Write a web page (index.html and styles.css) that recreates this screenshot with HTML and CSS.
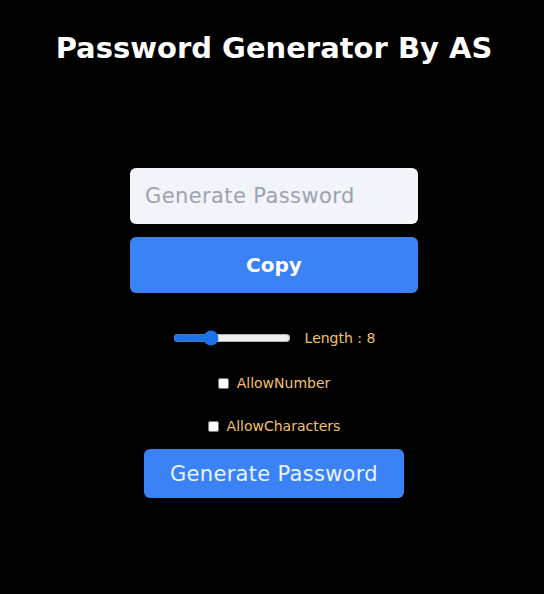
FILE: index.html
```html
<!DOCTYPE html>
<html lang="en">
<head>
<meta charset="utf-8">
<title>Password Generator By AS</title>
<link rel="stylesheet" href="styles.css">
</head>
<body>
  <h1 class="title">Password Generator By AS</h1>
  <main class="panel">
    <input class="pw-field" type="text" placeholder="Generate Password" readonly>
    <button class="btn btn-copy">Copy</button>
    <div class="row row-length">
      <input class="slider" type="range" min="5" max="15" value="8">
      <label class="label">Length : 8</label>
    </div>
    <div class="row row-number">
      <input class="check" type="checkbox" id="num">
      <label class="label" for="num">AllowNumber</label>
    </div>
    <div class="row row-chars">
      <input class="check" type="checkbox" id="chars">
      <label class="label" for="chars">AllowCharacters</label>
    </div>
    <button class="btn btn-generate">Generate Password</button>
  </main>
</body>
</html>
```
FILE: styles.css
```css
* { box-sizing: border-box; }
html, body {
  margin: 0;
  padding: 0;
  background: #000;
  height: 100%;
}
body {
  font-family: "DejaVu Sans", "Noto Sans", sans-serif;
  color: #fff;
  display: flex;
  flex-direction: column;
  align-items: center;
  padding-left: 4px;
}
.title {
  margin: 28px 0 0;
  font-size: 29px;
  font-weight: 700;
  line-height: 40px;
  color: #fff;
}
.panel {
  margin-top: 100px;
  display: flex;
  flex-direction: column;
  align-items: center;
  width: 288px;
}
.pw-field {
  width: 288px;
  height: 56px;
  border: none;
  border-radius: 6px;
  background: #f1f4f8;
  padding: 0 15px;
  font-family: inherit;
  font-size: 21px;
  letter-spacing: 0.4px;
  color: #333;
  outline: none;
}
.pw-field::placeholder { color: #9ca3af; }
.btn {
  border: none;
  background: #3b82f6;
  color: #fff;
  font-family: inherit;
  border-radius: 6px;
  cursor: pointer;
}
.btn-copy {
  margin-top: 13px;
  width: 288px;
  height: 56px;
  font-size: 20px;
  font-weight: 700;
}
.row {
  display: flex;
  align-items: center;
  justify-content: center;
  gap: 8px;
}
.row-length { margin-top: 34px; height: 22px; gap: 14px; }
.row-number { margin-top: 23px; height: 22px; }
.row-chars { margin-top: 21px; height: 22px; }
.label {
  color: #f4c06c;
  font-size: 14px;
}
.slider {
  width: 118px;
  margin: 0;
  accent-color: #1a73e8;
}
.check {
  width: 11px;
  height: 11px;
  margin: 0;
}
.btn-generate {
  margin-top: 12px;
  width: 260px;
  height: 49px;
  font-size: 21px;
  letter-spacing: 0.3px;
  font-weight: 400;
  color: #eaf4ff;
}
```
